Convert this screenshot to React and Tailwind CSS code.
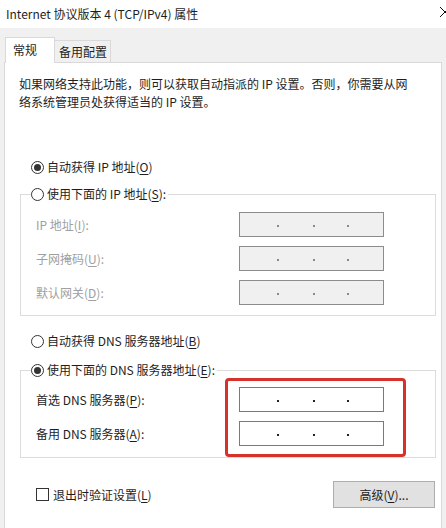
import React from "react";

const FONT = { fontFamily: '"Noto Sans CJK SC", "Noto Sans", sans-serif' };

function U({ children }) {
  return <span className="underline underline-offset-2">{children}</span>;
}

function Radio({ checked }) {
  return (
    <span className="flex h-[13px] w-[13px] shrink-0 items-center justify-center rounded-full border border-[#333333] bg-white">
      {checked && <span className="h-[7px] w-[7px] rounded-full bg-[#333333]" />}
    </span>
  );
}

function IpBox({ disabled }) {
  const dot = disabled ? "bg-[#8a8a8a]" : "bg-[#222222]";
  return (
    <div
      className={
        "flex h-[25px] w-[145px] items-center border " +
        (disabled ? "border-[#8c8c8c] bg-[#f0f0f0]" : "border-[#7a7a7a] bg-white")
      }
    >
      <span className={"ml-[37px] mt-[3px] h-[2px] w-[2px] " + dot} />
      <span className={"ml-[34px] mt-[3px] h-[2px] w-[2px] " + dot} />
      <span className={"ml-[32px] mt-[3px] h-[2px] w-[2px] " + dot} />
    </div>
  );
}

export default function App() {
  return (
    <div
      className="relative h-[528px] w-[446px] overflow-hidden bg-white text-[12px] leading-[18px] text-[#1e1e1e]"
      style={FONT}
    >
      {/* title bar */}
      <div className="relative flex h-[28px] items-center pl-[6px]">
        <span>Internet 协议版本 4 (TCP/IPv4) 属性</span>
        <svg className="absolute left-[440px] top-[7px]" width="10" height="10" viewBox="0 0 10 10">
          <path d="M0 0 L10 10 M10 0 L0 10" stroke="#111" strokeWidth="1" fill="none" />
        </svg>
      </div>

      <div className="h-[500px] bg-[#f0f0f0] px-[4px] pt-[9px]">
        {/* tabs */}
        <div className="relative z-10 flex h-[25px] items-end pl-[1px]">
          <div className="-mb-px flex h-[26px] w-[50px] items-start border border-b-0 border-[#d9d9d9] bg-white pl-[7px] pt-[3px]">
            常规
          </div>
          <div className="flex h-[22px] w-[56px] items-start border border-b-0 border-l-0 border-[#d9d9d9] bg-[#f0f0f0] pl-[4px] pt-[2px]">
            备用配置
          </div>
        </div>

        {/* panel */}
        <div className="h-[480px] border border-[#d9d9d9] bg-white">
          <p className="pl-[14px] pt-[12px]">
            如果网络支持此功能，则可以获取自动指派的 IP 设置。否则，你需要从网
            <br />
            络系统管理员处获得适当的 IP 设置。
          </p>

          <div className="mt-[47px] flex h-[18px] items-center gap-[3px] pl-[26px]">
            <Radio checked />
            <span>
              自动获得 IP 地址(<U>O</U>)
            </span>
          </div>

          <fieldset className="ml-[15px] mr-[5px] mt-[9px] border border-[#dcdcdc] pb-[10px]">
            <legend className="ml-[10px] pr-[2px]">
              <span className="flex h-[18px] items-center gap-[3px] bg-white">
                <Radio />
                <span>
                  使用下面的 IP 地址(<U>S</U>):
                </span>
              </span>
            </legend>
            <div className="grid grid-cols-[218px_145px] gap-y-[9px] pt-[9px] text-[#a0a0a0]">
              <span className="flex items-center pl-[15px]">
                IP 地址(<U>I</U>):
              </span>
              <IpBox disabled />
              <span className="flex items-center pl-[15px]">
                子网掩码(<U>U</U>):
              </span>
              <IpBox disabled />
              <span className="flex items-center pl-[15px]">
                默认网关(<U>D</U>):
              </span>
              <IpBox disabled />
            </div>
          </fieldset>

          <div className="mt-[16px] flex h-[18px] items-center gap-[3px] pl-[26px]">
            <Radio />
            <span>
              自动获得 DNS 服务器地址(<U>B</U>)
            </span>
          </div>

          <fieldset className="ml-[15px] mr-[5px] mt-[11px] border border-[#dcdcdc] pb-[11px]">
            <legend className="ml-[10px] pr-[2px]">
              <span className="flex h-[18px] items-center gap-[3px] bg-white">
                <Radio checked />
                <span>
                  使用下面的 DNS 服务器地址(<U>E</U>):
                </span>
              </span>
            </legend>
            <div className="grid grid-cols-[218px_145px] gap-y-[9px] pt-[8px]">
              <span className="flex items-center pl-[15px]">
                首选 DNS 服务器(<U>P</U>):
              </span>
              <IpBox />
              <span className="flex items-center pl-[15px]">
                备用 DNS 服务器(<U>A</U>):
              </span>
              <IpBox />
            </div>
          </fieldset>

          <div className="mt-[23px] flex items-center justify-between pl-[31px] pr-[6px]">
            <div className="flex items-center gap-[4px]">
              <span className="h-[13px] w-[13px] border border-[#333333] bg-white" />
              <span>
                退出时验证设置(<U>L</U>)
              </span>
            </div>
            <button className="flex h-[27px] w-[102px] items-center justify-center border border-[#adadad] bg-[#e1e1e1] text-[#1e1e1e]">
              高级(<U>V</U>)...
            </button>
          </div>
        </div>
      </div>

      {/* red annotation */}
      <div className="pointer-events-none absolute left-[225px] top-[378px] h-[79px] w-[181px] rounded-[4px] border-[3px] border-[#d7312b]" />
    </div>
  );
}
